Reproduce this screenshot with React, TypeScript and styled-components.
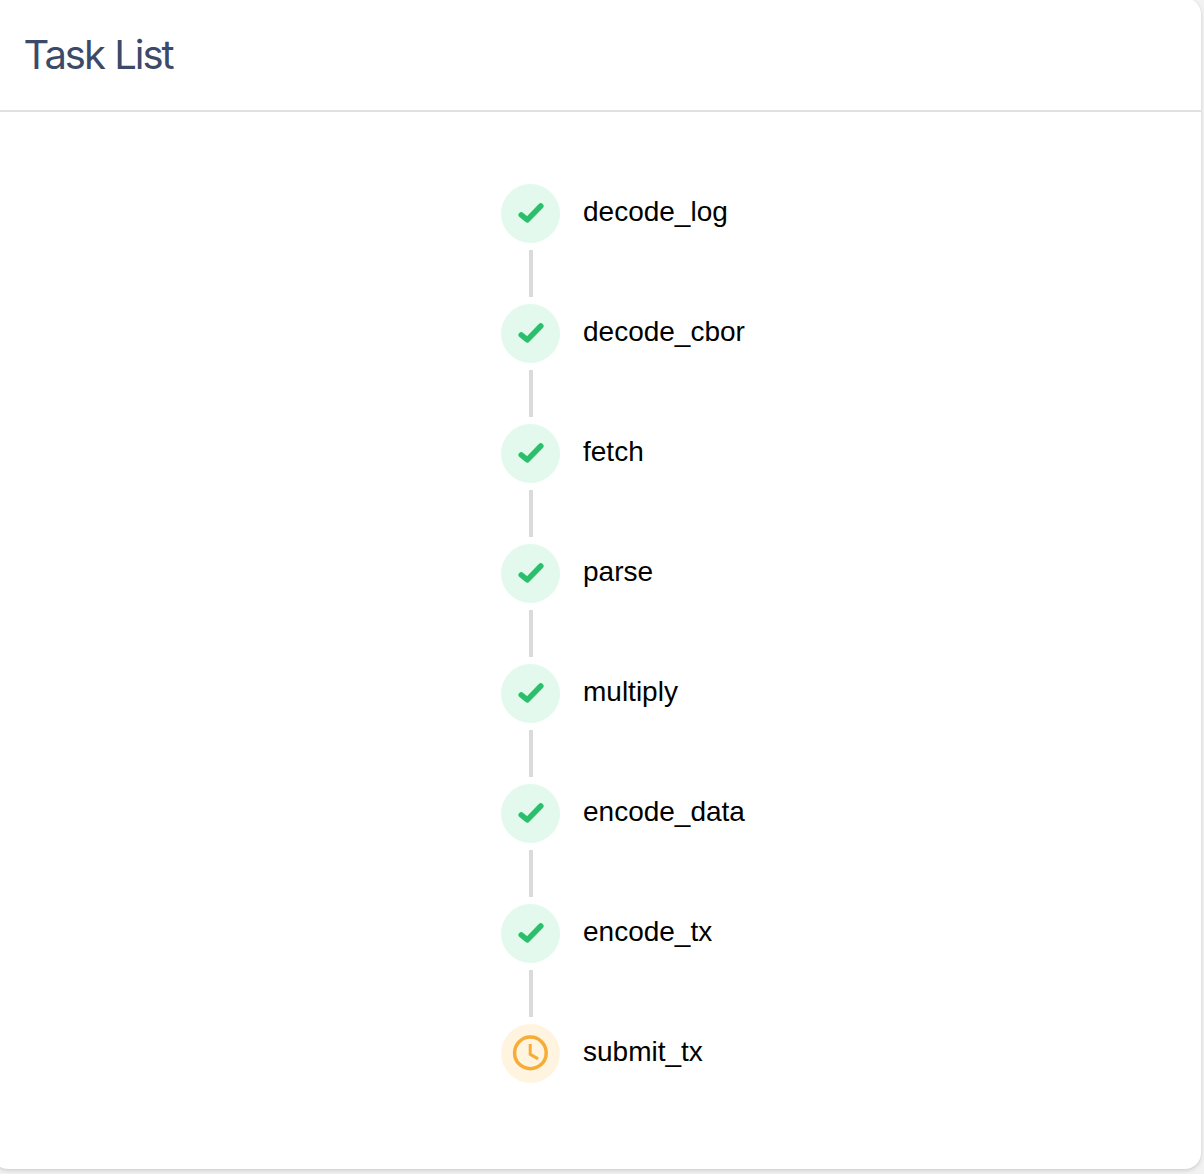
import React from "react";
import styled, { createGlobalStyle } from "styled-components";

const GlobalStyle = createGlobalStyle`
  body {
    margin: 0;
    background: #f2f2f3;
    overflow: hidden;
  }
`;

const Page = styled.div`
  height: 1174px;
  overflow: hidden;
`;

const Card = styled.section`
  box-sizing: border-box;
  width: 1209px;
  height: 1171px;
  margin: -2px 0 0 -8px;
  border-radius: 16px;
  background: #fff;
  box-shadow: 0 2px 4px rgba(0, 0, 0, 0.13), 0 0 2px rgba(0, 0, 0, 0.05);
  display: flex;
  flex-direction: column;
`;

const Header = styled.header`
  box-sizing: border-box;
  height: 114px;
  padding: 2px 31.5px 0;
  display: flex;
  align-items: center;
  border-bottom: 2px solid #e0e0e0;
`;

const Title = styled.h1`
  margin: 0;
  font: 400 40px/48px Inter, "Liberation Sans", sans-serif;
  letter-spacing: -2px;
  word-spacing: 1px;
  color: #3c4a69;
`;

const List = styled.ul`
  list-style: none;
  margin: 0;
  padding: 72px 0 0 509px;
`;

const Item = styled.li`
  display: flex;
  height: 120px;
  gap: 23px;
`;

const Track = styled.div`
  width: 59px;
  display: flex;
  flex-direction: column;
  align-items: center;
  gap: 7px;
`;

const Badge = styled.div<{ $pending: boolean }>`
  width: 59px;
  height: 59px;
  flex: none;
  border-radius: 50%;
  background: ${(p) => (p.$pending ? "#fff4e0" : "#e3f9ed")};

  svg {
    display: block;
  }
`;

const Connector = styled.div`
  width: 4px;
  height: 47px;
  background: #dadada;
`;

const Label = styled.span`
  font: 400 28px/56px "Liberation Sans", Helvetica, Arial, sans-serif;
  color: #000;
`;

const CheckIcon = () => (
  <svg width="59" height="59" viewBox="0 0 59 59" fill="none">
    <path
      d="M20.2 30.9 26.3 35.9 39.8 22"
      stroke="#2bbf6c"
      strokeWidth="5.5"
      strokeLinecap="round"
      strokeLinejoin="round"
    />
  </svg>
);

const ClockIcon = () => (
  <svg width="59" height="59" viewBox="0 0 59 59" fill="none" stroke="#f5ad38">
    <circle cx="29.4" cy="28.9" r="15.8" strokeWidth="3.5" />
    <path d="M29.2 20V30.3L37.1 34.9" strokeWidth="3" />
  </svg>
);

const tasks = [
  { name: "decode_log", pending: false },
  { name: "decode_cbor", pending: false },
  { name: "fetch", pending: false },
  { name: "parse", pending: false },
  { name: "multiply", pending: false },
  { name: "encode_data", pending: false },
  { name: "encode_tx", pending: false },
  { name: "submit_tx", pending: true },
];

export default function App() {
  return (
    <Page>
      <GlobalStyle />
      <Card>
        <Header>
          <Title>Task List</Title>
        </Header>
        <List>
          {tasks.map((task, i) => (
            <Item key={task.name}>
              <Track>
                <Badge $pending={task.pending}>
                  {task.pending ? <ClockIcon /> : <CheckIcon />}
                </Badge>
                {i < tasks.length - 1 && <Connector />}
              </Track>
              <Label>{task.name}</Label>
            </Item>
          ))}
        </List>
      </Card>
    </Page>
  );
}
